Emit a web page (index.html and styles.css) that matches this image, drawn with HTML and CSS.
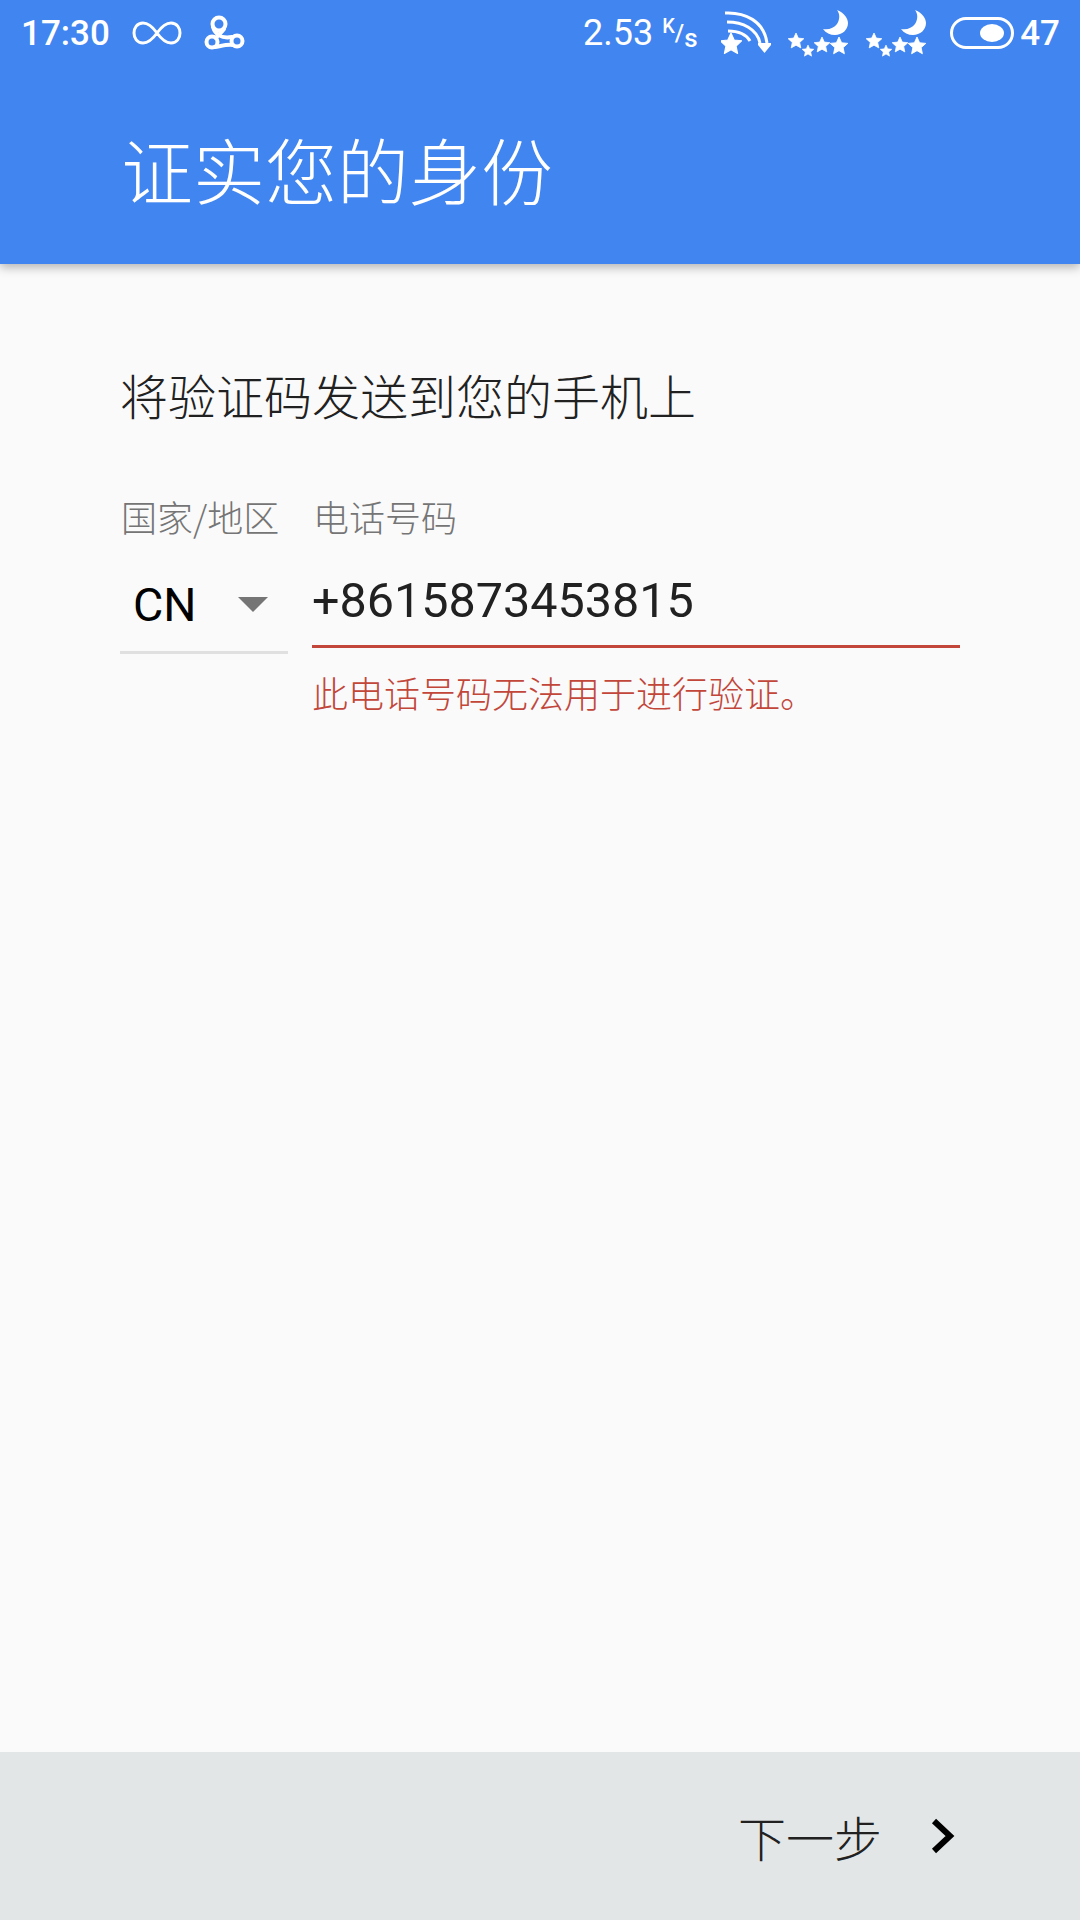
FILE: index.html
```html
<!DOCTYPE html>
<html lang="zh-CN">
<head>
    <meta charset="UTF-8">
    <title>证实您的身份</title>
    <link rel="stylesheet" href="styles.css">
</head>
<body>
    <svg class="defs" width="0" height="0">
        <symbol id="star" viewBox="-10 -10 20 20">
            <path d="M0-10 2.9-3.6 9.8-2.9 4.6 1.8 6 8.6 0 5.2-6 8.6-4.6 1.800-9.8-2.9-2.9-3.6Z" fill="#fff" stroke="#fff" stroke-width="1" stroke-linejoin="round"/>
        </symbol>
        <symbol id="night" viewBox="0 0 60 47">
            <path d="M49 0C57 3 60 9 60 13 60 20 54 25 47 25 42 25 38 23 35 19 41 20 46 18 49 14 52 9 52 4 49 0Z" fill="#fff"/>
            <use href="#star" x="0" y="23" width="16" height="16"/>
            <use href="#star" x="14" y="35" width="12" height="12"/>
            <use href="#star" x="26" y="27" width="16" height="16"/>
            <use href="#star" x="42" y="27" width="18" height="18"/>
        </symbol>
    </svg>

    <header class="appbar">
        <div class="status">
            <span class="clock">17:30</span>
            <svg class="ic-infinity" width="50" height="24" viewBox="0 0 50 24">
                <path d="M25 12C20 5 16 2 11 2 5 2 2 7 2 12S5 22 11 22C16 22 20 19 25 12 30 5 34 2 39 2 45 2 48 7 48 12S45 22 39 22C34 22 30 19 25 12Z" fill="none" stroke="#fff" stroke-width="3"/>
            </svg>
            <svg class="ic-trefoil" width="42" height="36" viewBox="0 0 42 36">
                <g fill="none" stroke="#fff" stroke-width="4" stroke-linecap="round">
                    <circle cx="15" cy="9" r="6.500"/>
                    <circle cx="8" cy="27" r="5.500"/>
                    <circle cx="33" cy="26" r="5.500"/>
                    <path d="M20 14C17 18 14 20 12 23"/>
                    <path d="M9 12C11 19 17 24 28 22"/>
                    <path d="M11 32C17 31 24 29 29 30"/>
                </g>
            </svg>
            <span class="spacer"></span>
            <span class="speed">2.53</span>
            <span class="unit"><sup>K</sup>/<sub>s</sub></span>
            <svg class="ic-signal" width="52" height="44" viewBox="0 0 52 44">
                <g fill="none" stroke="#fff" stroke-width="3">
                    <path d="M4 2C24 1 43 10 46 32"/>
                    <path d="M6 11C22 11 36 18 39 32"/>
                    <path d="M7 20C17 20 25 23 29 30"/>
                </g>
                <path d="M37 32H50V34L43.500 42 37 34Z" fill="#fff"/>
                <use href="#star" x="-1" y="22" width="22" height="22"/>
            </svg>
            <svg class="ic-night first" width="60" height="47"><use href="#night"/></svg>
            <svg class="ic-night" width="60" height="47"><use href="#night"/></svg>
            <span class="battery"><span class="knob"></span></span>
            <span class="level">47</span>
        </div>
        <h1>证实您的身份</h1>
    </header>

    <main class="content">
        <p class="lead">将验证码发送到您的手机上</p>
        <div class="form">
            <div class="field country">
                <label>国家/地区</label>
                <div class="select">
                    <span>CN</span>
                    <i class="caret"></i>
                </div>
            </div>
            <div class="field phone">
                <label>电话号码</label>
                <div class="input">+8615873453815</div>
                <div class="error">此电话号码无法用于进行验证。</div>
            </div>
        </div>
    </main>

    <footer class="bottom">
        <span>下一步</span>
        <svg width="24" height="36" viewBox="0 0 24 36">
            <path d="M3 3 19 18 3 33" fill="none" stroke="#000" stroke-width="6"/>
        </svg>
    </footer>
</body>
</html>
```

FILE: styles.css
```css
html, body {
    margin: 0;
    padding: 0;
}

body {
    width: 1080px;
    height: 1920px;
    overflow: hidden;
    display: flex;
    flex-direction: column;
    background: #fafafa;
    font-family: "Noto Sans CJK SC", Roboto, sans-serif;
    font-weight: 300;
    color: #212121;
}

.defs {
    position: absolute;
}

.appbar {
    height: 264px;
    flex: none;
    background: #4185f1;
    box-shadow: 0 3px 10px rgba(0, 0, 0, 0.3);
}

.status {
    height: 66px;
    display: flex;
    align-items: center;
    padding: 0 20px 0 21px;
    color: #fff;
    font-family: Roboto, sans-serif;
    font-weight: 400;
}

.clock {
    font-size: 35px;
    font-weight: 500;
}

.ic-infinity {
    margin-left: 22px;
}

.ic-trefoil {
    margin-left: 22px;
}

.spacer {
    flex: 1;
}

.speed {
    font-size: 36px;
}

.unit {
    width: 38px;
    margin-left: 9px;
    font-size: 24px;
    font-weight: 500;
    white-space: nowrap;
}

.unit sup {
    font-size: 20px;
    vertical-align: 8px;
    line-height: 0;
}

.unit sub {
    font-size: 26px;
    vertical-align: -6px;
    line-height: 0;
}

.ic-signal {
    margin-left: 21px;
}

.ic-night {
    margin-left: 18px;
}

.ic-night.first {
    margin-left: 15px;
}

.battery {
    box-sizing: border-box;
    width: 64px;
    height: 32px;
    margin-left: 24px;
    display: flex;
    align-items: center;
    justify-content: flex-end;
    padding-right: 7px;
    border: 3px solid #fff;
    border-radius: 16px;
}

.knob {
    width: 24px;
    height: 18px;
    border-radius: 50%;
    background: #fff;
}

.level {
    margin-left: 6px;
    font-size: 35px;
    font-weight: 500;
}

.appbar h1 {
    margin: 0;
    padding: 52px 0 0 121px;
    font-size: 72px;
    line-height: 100px;
    font-weight: 300;
    color: #fff;
}

.content {
    flex: 1;
    padding: 96px 120px 0 120px;
}

.lead {
    margin: 0;
    font-size: 48px;
    line-height: 68px;
}

.form {
    display: flex;
    gap: 24px;
    margin-top: 62px;
}

.field label {
    display: block;
    font-size: 36px;
    line-height: 52px;
    color: #757575;
}

.country {
    width: 168px;
}

.country label {
    padding-left: 1px;
    white-space: nowrap;
}

.select {
    box-sizing: border-box;
    height: 112px;
    display: flex;
    align-items: center;
    justify-content: space-between;
    padding: 16px 20px 0 13px;
    border-bottom: 3px solid #e0e0e0;
    font-family: Roboto, sans-serif;
    font-weight: 400;
    font-size: 46.500px;
    color: #000;
}

.caret {
    width: 0;
    height: 0;
    border-left: 15px solid transparent;
    border-right: 15px solid transparent;
    border-top: 15px solid #757575;
}

.phone {
    width: 648px;
}

.phone label {
    padding-left: 1px;
}

.input {
    height: 106px;
    box-sizing: border-box;
    padding-top: 24px;
    border-bottom: 3px solid #c2473a;
    font-family: Roboto, sans-serif;
    font-weight: 400;
    font-size: 48.500px;
    line-height: 70px;
}

.error {
    margin-top: 18px;
    font-size: 36px;
    line-height: 52px;
    color: #c2473a;
}

.bottom {
    height: 168px;
    flex: none;
    box-sizing: border-box;
    display: flex;
    align-items: center;
    justify-content: flex-end;
    gap: 49px;
    padding-right: 125px;
    background: #e3e6e7;
    font-size: 48px;
}
```
